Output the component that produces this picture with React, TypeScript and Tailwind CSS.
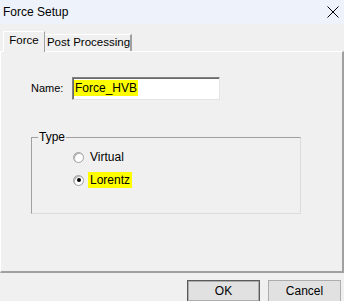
import React from 'react';

const Radio = ({ checked, label, highlight }: { checked?: boolean; label: string; highlight?: boolean }) => (
  <div className="flex items-center h-[12px]">
    <div className="w-[11px] h-[11px] rounded-full border border-[#a0a0a0] bg-white flex items-center justify-center shadow-[inset_1px_1px_0_#b4b4b4]">
      {checked && <div className="w-[4px] h-[4px] rounded-full bg-black" />}
    </div>
    <span className={`ml-[4px] px-[2px] leading-[16px] ${highlight ? 'bg-[#ffff00]' : ''}`}>{label}</span>
  </div>
);

export default function App() {
  return (
    <div className="w-[344px] h-[301px] bg-[#f0f0f0] text-[12px] text-black flex flex-col overflow-hidden" style={{ fontFamily: '"Liberation Sans", Arial, sans-serif' }}>
      {/* Title bar */}
      <div className="h-[24px] bg-[#eef2fa] flex items-center justify-between pl-[3px] pr-[3px] shrink-0">
        <span className="text-[12px]">Force Setup</span>
        <svg width="12" height="12" viewBox="0 0 12 12" className="mr-[2px]">
          <path d="M0.5 0.5 L11.5 11.5 M11.5 0.5 L0.5 11.5" stroke="#000" strokeWidth="1" />
        </svg>
      </div>

      {/* Tabs */}
      <div className="h-[27px] flex items-end pl-[3px] shrink-0 relative z-10 text-[11.5px] whitespace-nowrap">
        <div className="h-[21px] w-[42px] bg-[#f0f0f0] border-t border-l border-white border-r border-r-[#a0a0a0] flex items-center justify-center mb-[-1px] pb-[3px]">
          Force
        </div>
        <div className="h-[17px] w-[87px] bg-[#f0f0f0] border-t border-white border-r-2 border-r-[#a0a0a0] flex items-center justify-center pl-[2px]">
          Post Processing
        </div>
      </div>

      {/* Panel */}
      <div className="h-[222px] border-t border-l border-white border-r-2 border-b-2 border-r-[#a0a0a0] border-b-[#a0a0a0] shrink-0 pl-[30px] pt-[25px]">
        <div className="flex items-center">
          <span className="w-[41px] text-[11px]">Name:</span>
          <div className="w-[148px] h-[23px] bg-white border-t border-l border-[#828282] border-r border-b border-r-[#e3e3e3] border-b-[#e3e3e3] shadow-[inset_1px_1px_0_#696969] px-[1px] pt-[1px]">
            <span className="bg-[#ffff00] px-[1px] leading-[16px] inline-block">Force_HVB</span>
          </div>
        </div>

        <fieldset className="mt-[31px] w-[270px] h-[83px] border border-[#a0a0a0] border-r-[#dcdcdc] border-b-[#dcdcdc] pl-[41px] pt-[8px]">
          <legend className="px-[1px] ml-[-35px] leading-[12px]">Type</legend>
          <div className="flex flex-col gap-[11px]">
            <Radio label="Virtual" />
            <Radio checked label="Lorentz" highlight />
          </div>
        </fieldset>
      </div>

      {/* Buttons */}
      <div className="flex justify-end gap-[8px] pr-[3px] pt-[7px]">
        <button className="w-[73px] h-[22px] bg-[#e1e1e1] border border-[#5a5a5a] shadow-[inset_0_0_0_1px_#adadad]">OK</button>
        <button className="w-[73px] h-[22px] bg-[#e1e1e1] border border-[#adadad]">Cancel</button>
      </div>
    </div>
  );
}
